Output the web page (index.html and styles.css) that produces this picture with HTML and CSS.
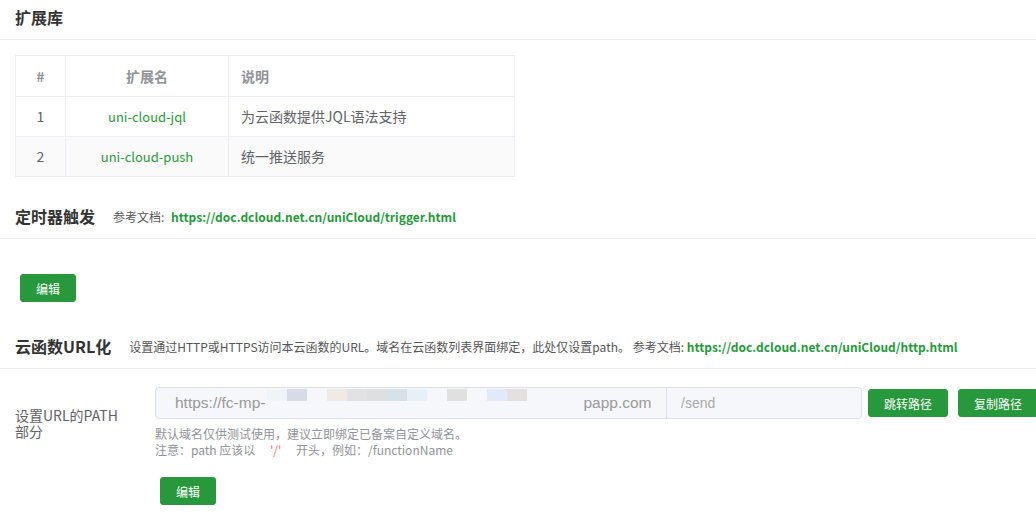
FILE: index.html
```html
<!DOCTYPE html>
<html>

<head>
  <title>云函数详情</title>
  <meta charset="utf-8">
  <link rel="stylesheet" href="styles.css">
</head>

<body>
  <div class="section-head">
    <h2>扩展库</h2>
  </div>
  <div class="section-body">
    <table class="ext-table">
      <tr>
        <th class="col-idx">#</th>
        <th class="col-name">扩展名</th>
        <th class="col-desc">说明</th>
      </tr>
      <tr>
        <td class="col-idx">1</td>
        <td class="col-name"><a href="#">uni-cloud-jql</a></td>
        <td class="col-desc">为云函数提供JQL语法支持</td>
      </tr>
      <tr class="striped">
        <td class="col-idx">2</td>
        <td class="col-name"><a href="#">uni-cloud-push</a></td>
        <td class="col-desc">统一推送服务</td>
      </tr>
    </table>
  </div>

  <div class="section-head head-timer">
    <h2>定时器触发</h2>
    <span class="tip">参考文档: <a class="doc-link" href="#">https://doc.dcloud.net.cn/uniCloud/trigger.html</a></span>
  </div>
  <div class="section-body timer-body">
    <button class="btn" type="button">编辑</button>
  </div>

  <div class="section-head head-url">
    <h2>云函数URL化</h2>
    <span class="tip">设置通过HTTP或HTTPS访问本云函数的URL。域名在云函数列表界面绑定，此处仅设置path。 参考文档: <a href="#">https://doc.dcloud.net.cn/uniCloud/http.html</a></span>
  </div>
  <div class="section-body url-body">
    <div class="form-item">
      <label class="form-label" for="url_path">设置URL的PATH部分</label>
      <div class="form-content">
        <div class="url-row">
          <div class="url-input">
            <div class="url-domain">https://fc-mp-<span class="mosaic"><i style="background:#eef4f8"></i><i style="background:#d6dbe7"></i><i></i><i style="background:#efeae3"></i><i style="background:#e2e2e4"></i><i style="background:#dedfe1"></i><i style="background:#d7e2e6"></i><i style="background:#e6f0f6"></i><i></i><i style="background:#e0e0e0"></i><i></i><i style="background:#e1eaf8"></i><i style="background:#e3e0df"></i></span>papp.com</div>
            <input class="url-path" type="text" id="url_path" value="/send" readonly>
          </div>
          <button class="btn btn-jump" type="button">跳转路径</button>
          <button class="btn" type="button">复制路径</button>
        </div>
        <div class="hint">
          <p>默认域名仅供测试使用，建议立即绑定已备案自定义域名。</p>
          <p>注意：path 应该以 <span class="slash">'/'</span> 开头，例如：/functionName</p>
        </div>
      </div>
    </div>
    <div class="form-actions">
      <button class="btn" type="button">编辑</button>
    </div>
  </div>
</body>

</html>
```

FILE: styles.css
```css
body {
  margin: 0;
  font-family: "Noto Sans CJK SC", "Noto Sans", sans-serif;
  color: #333;
  background-color: #fff;
  overflow-x: hidden;
}

.section-head {
  display: flex;
  align-items: center;
  height: 34px;
  padding: 0 15px 5px 15px;
  border-bottom: 1px solid #ebeef5;
}

.section-head h2 {
  margin: 0;
  font-size: 16px;
  font-weight: bold;
  color: #333;
}

.tip {
  margin-left: 18px;
  font-size: 12px;
  color: #555;
  white-space: nowrap;
}

.tip a {
  color: #1f9a3a;
  font-weight: bold;
  text-decoration: none;
}

.tip .doc-link {
  margin-left: 4px;
}

.section-body {
  padding: 0 15px;
}

/* table */
.ext-table {
  margin-top: 15px;
  width: 500px;
  border-collapse: collapse;
  font-size: 14px;
}

.ext-table th,
.ext-table td {
  border: 1px solid #ebeef5;
  padding: 0 12px;
}

.ext-table th {
  height: 40px;
  line-height: 40px;
  color: #909399;
  font-weight: bold;
}

.ext-table td {
  height: 39px;
  line-height: 39px;
  color: #606266;
}

.ext-table .striped td {
  background-color: #fafafa;
}

.col-idx {
  width: 25px;
  text-align: center;
}

.col-name {
  width: 138px;
  text-align: center;
}

.col-desc {
  text-align: left;
}

.ext-table a {
  font-size: 13px;
  color: #2b9939;
  text-decoration: none;
}

/* buttons */
.btn {
  flex-shrink: 0;
  height: 28px;
  padding: 0 15px;
  margin-left: 5px;
  font-family: "Noto Sans CJK SC", sans-serif;
  font-size: 12px;
  color: #fff;
  white-space: nowrap;
  background-color: #27983b;
  border: 1px solid #27983b;
  border-radius: 3px;
  cursor: pointer;
}

.head-timer {
  margin-top: 22px;
}

.timer-body {
  padding-top: 35px;
}

.head-url {
  margin-top: 27px;
}

/* url form */
.url-body {
  padding-top: 18px;
}

.form-item {
  display: flex;
  align-items: center;
}

.form-label {
  flex-shrink: 0;
  width: 110px;
  margin-right: 30px;
  font-size: 14px;
  line-height: 16px;
  color: #606266;
}

.form-content {
  flex-shrink: 0;
}

.url-row {
  display: flex;
  align-items: center;
}

.url-input {
  display: flex;
  flex-shrink: 0;
  width: 707px;
  height: 32px;
  box-sizing: border-box;
  border: 1px solid #dcdfe6;
  border-radius: 4px;
  background-color: #f5f7fa;
}

.url-domain {
  width: 511px;
  flex-shrink: 0;
  box-sizing: border-box;
  padding-left: 19px;
  border-right: 1px solid #dcdfe6;
  font-family: "Liberation Sans", Arial, sans-serif;
  font-size: 15.5px;
  line-height: 30px;
  color: #999;
  white-space: nowrap;
  overflow: hidden;
}

.mosaic {
  display: inline-block;
  width: 316px;
  height: 12px;
  margin-left: 2px;
  vertical-align: -1px;
  white-space: nowrap;
}

.mosaic i {
  display: inline-block;
  width: 20px;
  height: 12px;
  vertical-align: top;
}

.url-path {
  flex: 1;
  min-width: 0;
  padding: 0 14px;
  border: none;
  background: transparent;
  font-family: "Liberation Sans", Arial, sans-serif;
  font-size: 14px;
  color: #aaa;
  outline: none;
}

.btn-jump {
  margin-left: 6px;
}

.url-row .btn + .btn {
  margin-left: 10px;
}

.hint {
  margin-top: 7px;
  font-size: 12px;
  line-height: 16px;
  color: #909399;
}

.hint p {
  margin: 0;
}

.slash {
  margin: 0 12px;
  color: #f56c6c;
}

.form-actions {
  padding-left: 140px;
  margin-top: 19px;
}
```
